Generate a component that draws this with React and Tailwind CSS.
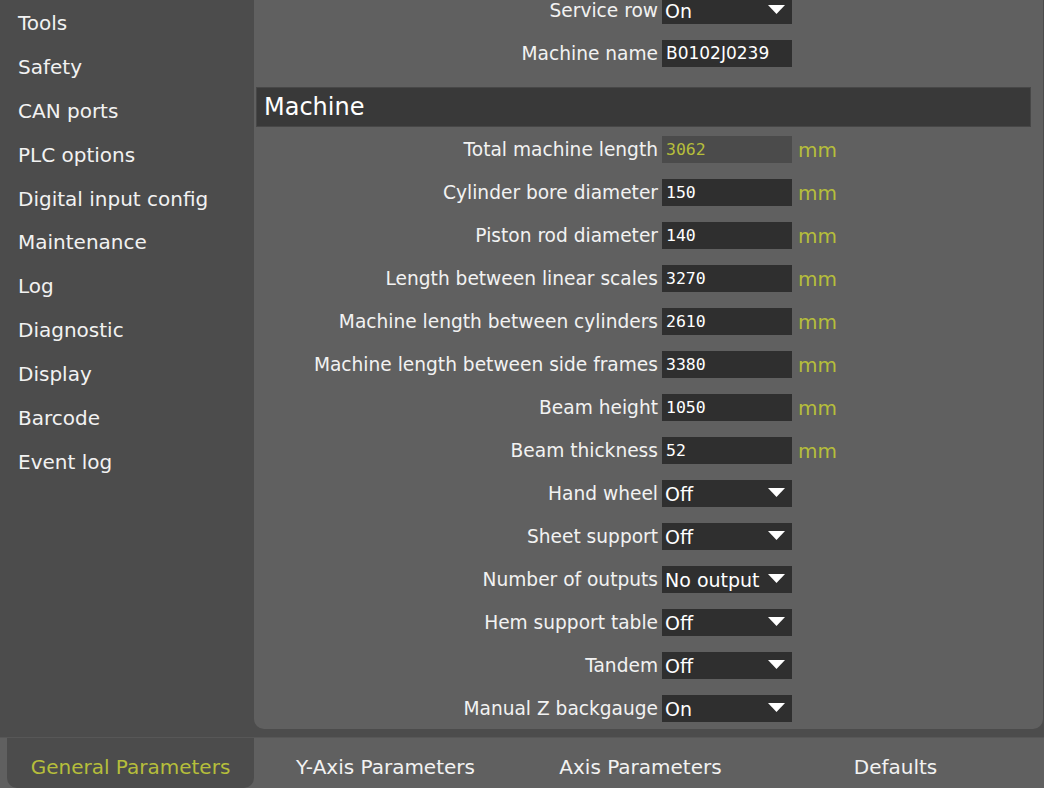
import React from "react";

const font = { fontFamily: "'DejaVu Sans', 'Noto Sans', sans-serif" };

const MENU = [
  "Tools",
  "Safety",
  "CAN ports",
  "PLC options",
  "Digital input config",
  "Maintenance",
  "Log",
  "Diagnostic",
  "Display",
  "Barcode",
  "Event log",
];

const MACHINE_ROWS = [
  { label: "Total machine length", value: "3062", unit: "mm", disabled: true },
  { label: "Cylinder bore diameter", value: "150", unit: "mm" },
  { label: "Piston rod diameter", value: "140", unit: "mm" },
  { label: "Length between linear scales", value: "3270", unit: "mm" },
  { label: "Machine length between cylinders", value: "2610", unit: "mm" },
  { label: "Machine length between side frames", value: "3380", unit: "mm" },
  { label: "Beam height", value: "1050", unit: "mm" },
  { label: "Beam thickness", value: "52", unit: "mm" },
  { label: "Hand wheel", select: "Off" },
  { label: "Sheet support", select: "Off" },
  { label: "Number of outputs", select: "No output" },
  { label: "Hem support table", select: "Off" },
  { label: "Tandem", select: "Off" },
  { label: "Manual Z backgauge", select: "On" },
];

const TABS = ["General Parameters", "Y-Axis Parameters", "Axis Parameters", "Defaults"];

function Caret() {
  return (
    <svg width="17" height="9" viewBox="0 0 17 9" className="shrink-0">
      <polygon points="0,0 17,0 8.5,9" fill="#ffffff" />
    </svg>
  );
}

function Row({ label, children, unit }) {
  return (
    <div className="flex items-center h-[27px]">
      <div className="w-[404px] text-right text-[18.6px] text-[#f2f2f2] whitespace-nowrap leading-none pt-[1px]">
        {label}
      </div>
      <div className="ml-[4px] w-[130px] h-[27px]">{children}</div>
      {unit && (
        <div className="ml-[6px] text-[20px] text-[#b6be3b] leading-none pt-[1px]">{unit}</div>
      )}
    </div>
  );
}

function Select({ value }) {
  return (
    <div className="w-full h-full bg-[#2f2f2f] flex items-start justify-between pl-[3px] pr-[7px]">
      <span className="text-[19px] text-white leading-none pt-[5px] whitespace-nowrap">{value}</span>
      <div className="pt-[8px]">
        <Caret />
      </div>
    </div>
  );
}

function NumberBox({ value, disabled }) {
  return (
    <div
      className={`w-full h-full flex items-center pl-[4px] pt-[2px] text-[16.5px] ${
        disabled ? "bg-[#4b4b4b] text-[#b6be3b]" : "bg-[#2f2f2f] text-white"
      }`}
      style={{ fontFamily: "'DejaVu Sans Mono', monospace" }}
    >
      {value}
    </div>
  );
}

export default function App() {
  return (
    <div className="w-[1044px] h-[788px] bg-[#4c4c4c] flex flex-col overflow-hidden" style={font}>
      <div className="flex h-[737px]">
        {/* menu lateral */}
        <aside className="w-[254px] shrink-0 pl-[18px] pt-[1px]">
          {MENU.map((m) => (
            <div key={m} className="h-[43.9px] flex items-center text-[20px] text-[#f2f2f2] whitespace-nowrap">
              {m}
            </div>
          ))}
        </aside>

        {/* panel de parametros */}
        <main className="w-[789px] h-[729px] bg-[#606060] rounded-b-[10px] overflow-hidden">
          <div className="mt-[-3px] flex flex-col">
            <Row label="Service row">
              <Select value="On" />
            </Row>
            <div className="mt-[16px]">
              <Row label="Machine name">
                <div className="w-full h-full bg-[#2f2f2f] flex items-center pl-[4px] pt-[1px] text-[17px] text-white">
                  B0102J0239
                </div>
              </Row>
            </div>

            <div className="mt-[20px] ml-[2px] w-[775px] h-[40px] bg-[#393939] border border-[#474747] flex items-center pl-[7px] text-[24px] text-white">
              Machine
            </div>

            <div className="mt-[9px] flex flex-col gap-[16px]">
              {MACHINE_ROWS.map((r) => (
                <Row key={r.label} label={r.label} unit={r.unit}>
                  {r.select ? (
                    <Select value={r.select} />
                  ) : (
                    <NumberBox value={r.value} disabled={r.disabled} />
                  )}
                </Row>
              ))}
            </div>
          </div>
        </main>
      </div>

      <div className="h-px bg-[#575757]" />

      {/* pestañas */}
      <nav className="flex-1 bg-[#606060] flex pl-[3px]">
        {TABS.map((t, i) => (
          <div key={t} className="w-[255px] h-full">
            {i === 0 ? (
              <div className="mx-[4px] h-full bg-[#4c4c4c] rounded-b-[10px] flex items-center justify-center pt-[7px] text-[20px] text-[#b6be3b] whitespace-nowrap">
                {t}
              </div>
            ) : (
              <div className="h-full flex items-center justify-center pt-[7px] text-[20px] text-[#f2f2f2] whitespace-nowrap">
                {t}
              </div>
            )}
          </div>
        ))}
      </nav>
    </div>
  );
}
